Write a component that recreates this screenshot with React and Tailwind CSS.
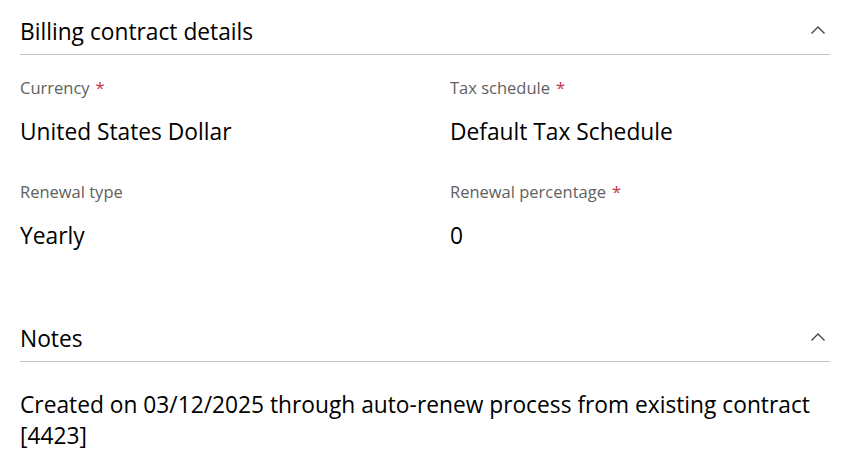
const Chevron = () => (
  <svg width="16" height="10" viewBox="0 0 16 10" fill="none" className="text-[#424242]">
    <path d="M1.5 8.5 L8 2 L14.5 8.5" stroke="currentColor" strokeWidth="1.3" />
  </svg>
);

const Field = ({ label, value, required }) => (
  <div className="flex flex-col">
    <div className="h-[22px] text-[16.5px] leading-[22px] text-[#616161]">
      {label}
      {required && <span className="ml-[6px] text-[#c4314b]">*</span>}
    </div>
    <div className="mt-[18px] h-[30px] text-[22.75px] leading-[30px] text-black">{value}</div>
  </div>
);

const SectionHeader = ({ title }) => (
  <div className="flex h-[55px] items-start justify-between border-b border-[#c4c4c4] pt-[17px]">
    <span className="text-[22.75px] leading-[30px] text-black">{title}</span>
    <span className="mr-[4px] mt-[8px]">
      <Chevron />
    </span>
  </div>
);

export default function App() {
  return (
    <div
      className="h-[471px] w-[848px] bg-white pl-[20px] pr-[18px]"
      style={{ fontFamily: '"Open Sans", sans-serif' }}
    >
      <SectionHeader title="Billing contract details" />
      <div className="mt-[22px] grid grid-cols-[430px_1fr] gap-y-[34px]">
        <Field label="Currency" value="United States Dollar" required />
        <Field label="Tax schedule" value="Default Tax Schedule" required />
        <Field label="Renewal type" value="Yearly" />
        <Field label="Renewal percentage" value="0" required />
      </div>
      <div className="mt-[56px]">
        <SectionHeader title="Notes" />
      </div>
      <p className="mt-[27px] text-[22.75px] leading-[31px] text-black">
        Created on 03/12/2025 through auto-renew process from existing contract [4423]
      </p>
    </div>
  );
}
